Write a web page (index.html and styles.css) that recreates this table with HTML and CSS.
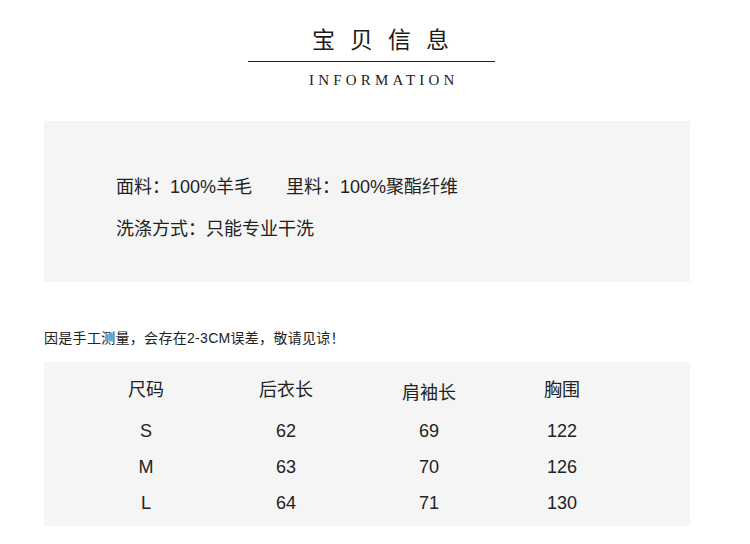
FILE: index.html
```html
<!DOCTYPE html>
<html lang="zh-CN">
<head>
<meta charset="utf-8">
<title>宝贝信息</title>
<link rel="stylesheet" href="styles.css">
</head>
<body>
<div class="page">
  <header class="head">
    <h1 class="title">宝贝信息</h1>
    <div class="rule"></div>
    <div class="sub">INFORMATION</div>
  </header>

  <section class="info">
    <p class="info-line"><span class="pair">面料：100%羊毛</span><span class="pair">里料：100%聚酯纤维</span></p>
    <p class="info-line">洗涤方式：只能专业干洗</p>
  </section>

  <p class="note">因是手工测量，会存在2-3CM误差，敬请见谅！</p>

  <section class="sizes">
    <div class="row head-row">
      <div class="cell">尺码</div>
      <div class="cell">后衣长</div>
      <div class="cell low">肩袖长</div>
      <div class="cell">胸围</div>
    </div>
    <div class="row">
      <div class="cell">S</div><div class="cell">62</div><div class="cell">69</div><div class="cell">122</div>
    </div>
    <div class="row">
      <div class="cell">M</div><div class="cell">63</div><div class="cell">70</div><div class="cell">126</div>
    </div>
    <div class="row">
      <div class="cell">L</div><div class="cell">64</div><div class="cell">71</div><div class="cell">130</div>
    </div>
  </section>
</div>
</body>
</html>
```

FILE: styles.css
```css
* { box-sizing: border-box; }
html, body { margin: 0; padding: 0; background: #fff; }
body {
  font-family: "Liberation Sans", "Noto Sans CJK SC", sans-serif;
  color: #222;
}
.page { width: 750px; padding-top: 25px; }

.head { display: flex; flex-direction: column; }
.title {
  margin: 0;
  font-size: 23px;
  font-weight: normal;
  line-height: 30px;
  letter-spacing: 15px;
  padding-left: 312px;
  color: #1a1a1a;
}
.rule {
  margin: 6px 0 0 248px;
  width: 247px;
  height: 1px;
  background: #222;
}
.sub {
  font-family: "Liberation Serif", serif;
  font-size: 15px;
  line-height: 20px;
  letter-spacing: 4.2px;
  padding-left: 309px;
  margin-top: 8px;
  color: #222;
}

.info {
  margin: 31px 0 0 44px;
  width: 646px;
  height: 161px;
  background: #f5f5f5;
  padding: 54px 0 0 72px;
  display: flex;
  flex-direction: column;
  gap: 18px;
}
.info-line {
  margin: 0;
  font-size: 18px;
  line-height: 24px;
  display: flex;
  gap: 34px;
}

.note {
  margin: 46px 0 0 44px;
  font-size: 14px;
  line-height: 20px;
  letter-spacing: 0.3px;
}

.sizes {
  margin: 14px 0 0 44px;
  width: 646px;
  height: 164px;
  background: #f5f5f5;
  padding: 10px 0 0 32px;
  display: flex;
  flex-direction: column;
}
.row {
  display: grid;
  grid-template-columns: 140px 140px 146px 120px;
  font-size: 18px;
  line-height: 36px;
}
.head-row { margin-bottom: 5px; }
.cell { text-align: center; }
.low { margin-top: 3px; margin-bottom: -3px; }
```
